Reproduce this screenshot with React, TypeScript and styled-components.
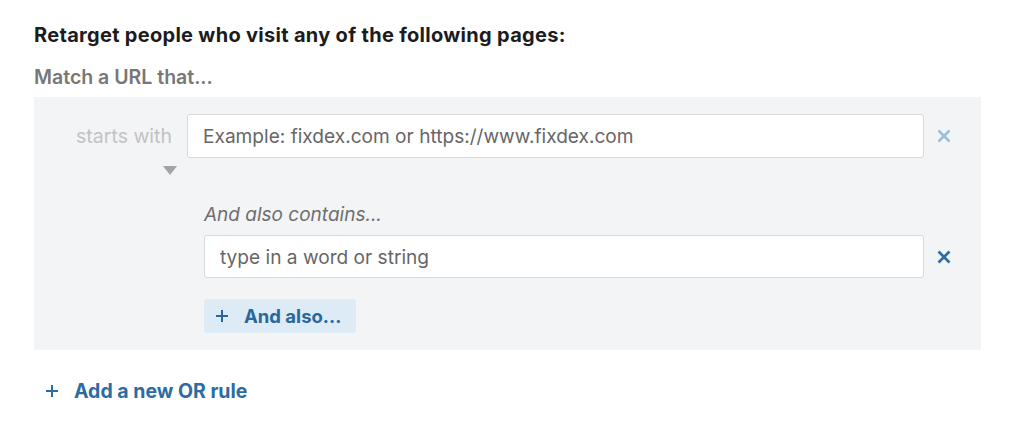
import React from "react";
import styled, { createGlobalStyle } from "styled-components";

const Global = createGlobalStyle`
  html, body { margin: 0; padding: 0; background: #ffffff; }
  body { font-family: Inter, "Liberation Sans", Arial, sans-serif; -webkit-font-smoothing: antialiased; }
  * { box-sizing: border-box; }
`;

const Page = styled.div`
  width: 1024px;
  height: 427px;
  padding: 23px 43px 0 34px;
`;

const Title = styled.h2`
  margin: 0;
  font-size: 20px;
  line-height: 24px;
  font-weight: 700;
  letter-spacing: 0.3px;
  color: #1c1c1e;
`;

const Subtitle = styled.div`
  margin-top: 18px;
  font-size: 19.5px;
  line-height: 24px;
  font-weight: 600;
  color: #777777;
`;

const Panel = styled.div`
  margin-top: 8px;
  background: #f3f4f6;
  padding: 17px 0 17px 0;
  display: grid;
  grid-template-columns: 153px 17px 1fr 57px;
`;

const Selector = styled.div`
  grid-column: 1;
  grid-row: 1 / span 2;
  display: flex;
  flex-direction: column;
  align-items: flex-end;
`;

const SelectorLabel = styled.div`
  height: 44px;
  display: flex;
  align-items: center;
  padding-right: 15px;
  font-size: 19.5px;
  color: #c2c2c4;
`;

const Caret = styled.div`
  margin-top: 8px;
  margin-right: 10px;
  width: 0;
  height: 0;
  border-left: 7px solid transparent;
  border-right: 7px solid transparent;
  border-top: 9px solid #a3a3a6;
`;

const Field = styled.input<{ $col: string; $h: number }>`
  grid-column: ${(p) => p.$col};
  height: ${(p) => p.$h}px;
  width: 100%;
  background: #ffffff;
  border: 1px solid #d9d9db;
  border-radius: 3px;
  padding: 0 15px;
  font-family: inherit;
  font-size: 19.1px;
  color: #333;
  outline: none;
  &::placeholder { color: #666666; opacity: 1; }
`;

const RemoveCell = styled.div<{ $h: number }>`
  grid-column: 4;
  height: ${(p) => p.$h}px;
  display: flex;
  align-items: center;
  padding-left: 13px;
`;

const ContainsLabel = styled.div`
  grid-column: 3;
  margin-top: 45px;
  margin-bottom: 8px;
  font-size: 19px;
  line-height: 24px;
  font-style: italic;
  color: #6e6e70;
`;

const AndAlsoButton = styled.button`
  grid-column: 3;
  justify-self: start;
  margin-top: 21px;
  height: 34px;
  display: flex;
  align-items: center;
  gap: 16px;
  padding: 0 15px 0 12px;
  background: #dcebf5;
  border: none;
  border-radius: 3px;
  font-family: inherit;
  font-size: 18.5px;
  font-weight: 700;
  color: #2a679b;
  cursor: pointer;
`;

const AddRule = styled.button`
  margin-top: 29px;
  margin-left: 12px;
  display: flex;
  align-items: center;
  gap: 16px;
  padding: 0;
  background: none;
  border: none;
  font-family: inherit;
  font-size: 19.5px;
  line-height: 24px;
  font-weight: 700;
  color: #2d6ca2;
  cursor: pointer;
`;

const XIcon = ({ color }: { color: string }) => (
  <svg width="14" height="14" viewBox="0 0 14 14">
    <path d="M1.5 1.5 L12.5 12.5 M12.5 1.5 L1.5 12.5" stroke={color} strokeWidth="2.7" strokeLinecap="butt" />
  </svg>
);

const PlusIcon = ({ color }: { color: string }) => (
  <svg width="12" height="12" viewBox="0 0 12 12">
    <path d="M6 0 V12 M0 6 H12" stroke={color} strokeWidth="2" />
  </svg>
);

export default function App() {
  return (
    <>
      <Global />
      <Page>
        <Title>Retarget people who visit any of the following pages:</Title>
        <Subtitle>Match a URL that...</Subtitle>
        <Panel>
          <Selector>
            <SelectorLabel>starts with</SelectorLabel>
            <Caret />
          </Selector>
          <Field $col="2 / span 2" $h={44} placeholder="Example: fixdex.com or https://www.fixdex.com" />
          <RemoveCell $h={44}>
            <XIcon color="#9dc0da" />
          </RemoveCell>
          <ContainsLabel>And also contains...</ContainsLabel>
          <Field $col="3" $h={43} placeholder="type in a word or string" />
          <RemoveCell $h={43}>
            <XIcon color="#2b6da4" />
          </RemoveCell>
          <AndAlsoButton>
            <PlusIcon color="#2a679b" />
            And also...
          </AndAlsoButton>
        </Panel>
        <AddRule>
          <PlusIcon color="#2d6ca2" />
          Add a new OR rule
        </AddRule>
      </Page>
    </>
  );
}
